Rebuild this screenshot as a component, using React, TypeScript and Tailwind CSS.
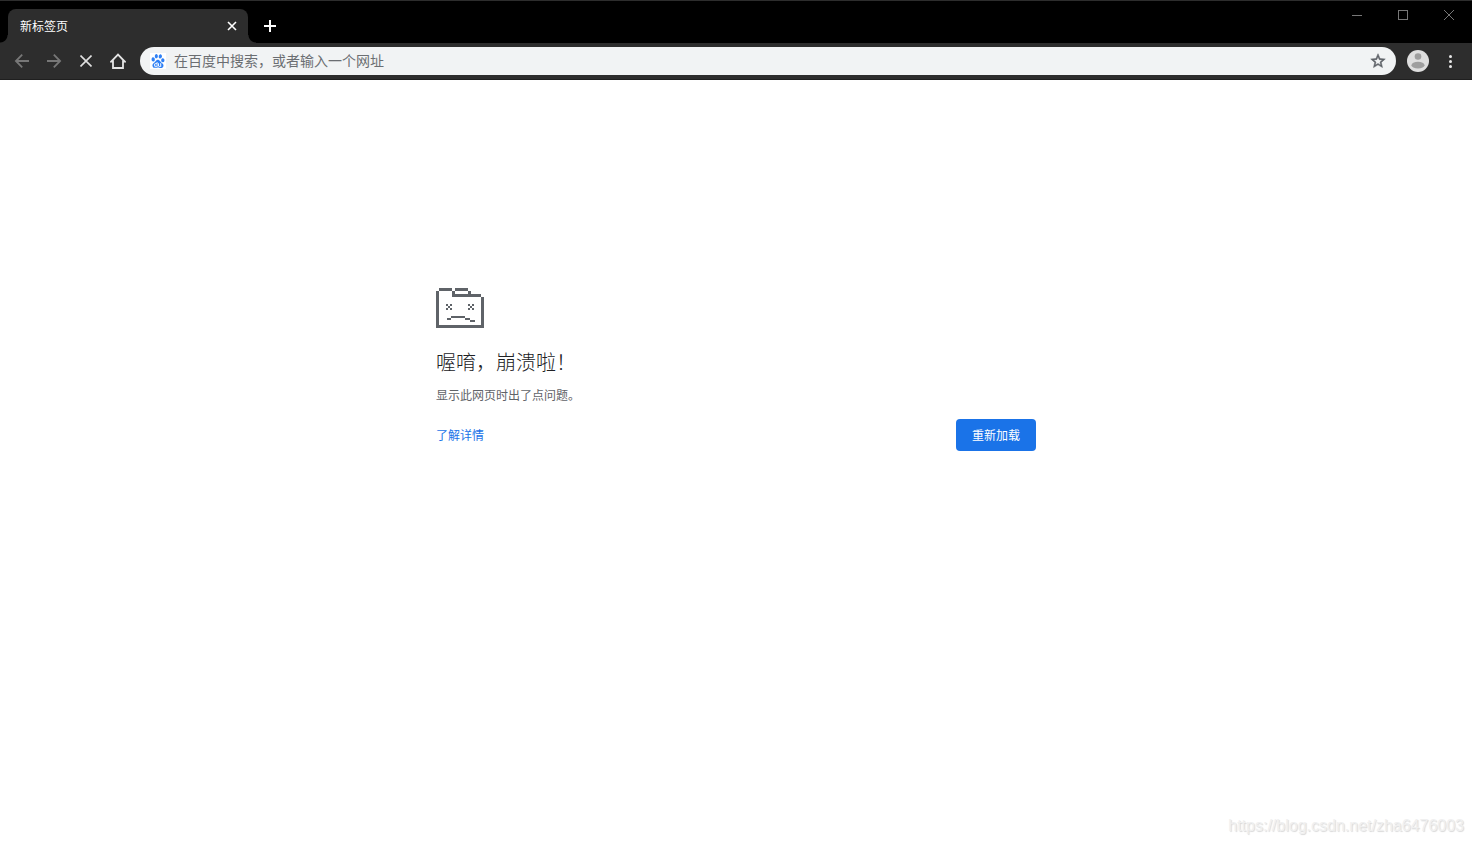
import React from "react";
import { SiBaidu } from "react-icons/si";

const iconButton = "flex h-7 w-7 items-center justify-center rounded-full";

function ArrowIcon({ forward = false }: { forward?: boolean }) {
  return (
    <svg viewBox="0 0 16 16" className="h-4 w-4" fill="none" stroke="#777777" strokeWidth="1.8">
      {forward ? <path d="M1 8H14M7.8 1.7L14.1 8L7.8 14.3" /> : <path d="M15 8H2M8.2 1.7L1.9 8L8.2 14.3" />}
    </svg>
  );
}

function TabStrip() {
  return (
    <div className="flex h-[43px] items-end justify-between border-t border-[#2d2d2d] bg-black">
      <div className="flex h-[34px] items-end">
        <div className="h-2 w-2 bg-[radial-gradient(circle_at_0_0,#000_7px,#2d2d2d_8px)]" />
        <div className="flex h-[34px] w-60 items-center justify-between rounded-t-lg bg-[#2d2d2d] pr-2 pl-3">
          <span className="text-xs text-white">新标签页</span>
          <button type="button" aria-label="关闭标签页" className="flex h-4 w-4 items-center justify-center">
            <svg viewBox="0 0 10 10" className="h-[10px] w-[10px]" stroke="#ffffff" strokeWidth="1.6">
              <path d="M1 1L9 9M9 1L1 9" />
            </svg>
          </button>
        </div>
        <div className="h-2 w-2 bg-[radial-gradient(circle_at_100%_0,#000_7px,#2d2d2d_8px)]" />
        <button type="button" aria-label="新标签页" className="flex h-[34px] w-7 items-center justify-center">
          <svg viewBox="0 0 12 12" className="h-3 w-3" fill="#ffffff">
            <path d="M5 0H7V5H12V7H7V12H5V7H0V5H5Z" />
          </svg>
        </button>
      </div>
      <div className="flex self-start">
        <button type="button" aria-label="最小化" className="flex h-7 w-[46px] items-center justify-center">
          <svg viewBox="0 0 10 10" className="h-[10px] w-[10px]" fill="#777777">
            <path d="M0 5H10V6H0Z" />
          </svg>
        </button>
        <button type="button" aria-label="最大化" className="flex h-7 w-[46px] items-center justify-center">
          <svg viewBox="0 0 10 10" className="h-[10px] w-[10px]" fill="none" stroke="#777777">
            <rect x="0.5" y="0.5" width="9" height="9" />
          </svg>
        </button>
        <button type="button" aria-label="关闭" className="flex h-7 w-[46px] items-center justify-center">
          <svg viewBox="0 0 10 10" className="h-[10px] w-[10px]" stroke="#777777">
            <path d="M0 0L10 10M10 0L0 10" />
          </svg>
        </button>
      </div>
    </div>
  );
}

function Toolbar() {
  return (
    <div className="flex h-[37px] items-center border-b border-[#1f1f1f] bg-[#2d2d2d] pr-2 pl-2">
      <div className="flex gap-1">
        <button type="button" aria-label="后退" className={iconButton}>
          <ArrowIcon />
        </button>
        <button type="button" aria-label="前进" className={iconButton}>
          <ArrowIcon forward />
        </button>
        <button type="button" aria-label="停止" className={iconButton}>
          <svg viewBox="0 0 12 12" className="h-3 w-3" stroke="#e0e0e0" strokeWidth="1.6">
            <path d="M0.5 0.5L11.5 11.5M11.5 0.5L0.5 11.5" />
          </svg>
        </button>
        <button type="button" aria-label="主页" className={iconButton}>
          <svg viewBox="0 0 16 16" className="h-4 w-4" fill="none" stroke="#e4e4e4" strokeWidth="1.8">
            <path d="M1.5 8.5H3V15H13V8.5H14.8L8 1.6L1.2 8.5Z" strokeLinejoin="miter" />
          </svg>
        </button>
      </div>
      <div className="ml-2 flex h-7 flex-1 items-center rounded-full bg-[#f1f3f4] pr-2 pl-[10px]">
        <span className="flex h-4 w-4 items-center justify-center bg-white">
          <SiBaidu className="h-[14px] w-[14px] text-[#2f80f5]" />
        </span>
        <input
          type="text"
          aria-label="地址和搜索栏"
          placeholder="在百度中搜索，或者输入一个网址"
          className="ml-2 h-6 flex-1 bg-transparent pb-0.5 text-sm text-[#202124] outline-none placeholder:text-[#6b6e72]"
        />
        <button type="button" aria-label="为此网页添加书签" className="flex h-5 w-5 items-center justify-center">
          <svg viewBox="1 1 22 22" className="h-4 w-4" fill="#5f6368" stroke="#5f6368" strokeWidth="0.7">
            <path d="M22 9.24l-7.19-.62L12 2 9.19 8.63 2 9.24l5.46 4.73L5.82 21 12 17.27 18.18 21l-1.63-7.03L22 9.24zM12 15.4l-3.76 2.27 1-4.28-3.32-2.88 4.38-.38L12 6.1l1.71 4.04 4.38.38-3.32 2.88 1 4.28L12 15.4z" />
          </svg>
        </button>
      </div>
      <button type="button" aria-label="用户" className="ml-2 flex h-7 w-7 items-center justify-center">
        <svg viewBox="0 0 22 22" className="h-[22px] w-[22px]">
          <circle cx="11" cy="11" r="11" fill="#dedede" />
          <circle cx="11" cy="6.5" r="3.3" fill="#9e9e9e" />
          <ellipse cx="11" cy="15.2" rx="6.5" ry="3.4" fill="#9e9e9e" />
        </svg>
      </button>
      <button type="button" aria-label="自定义及控制" className="ml-1 flex h-7 w-7 items-center justify-center">
        <svg viewBox="0 0 4 14" className="h-[14px] w-1" fill="#e8e8e8">
          <circle cx="2.5" cy="2.5" r="1.5" />
          <circle cx="2.5" cy="7.5" r="1.5" />
          <circle cx="2.5" cy="12.5" r="1.5" />
        </svg>
      </button>
    </div>
  );
}

function SadFolder() {
  return (
    <svg viewBox="0 0 48 40" className="h-10 w-12" fill="#5f6368" shapeRendering="crispEdges" aria-hidden="true">
      <path d="M3 0H16V3H3ZM19 0H32V3H19ZM0 3H3V37H45V9H48V40H0ZM16 3H19V6H45V9H16ZM32 3H35V6H32Z" />
      <path d="M10 16h2v2h-2zM14 16h2v2h-2zM12 18h2v2h-2zM10 20h2v2h-2zM14 20h2v2h-2z" />
      <path d="M32 16h2v2h-2zM36 16h2v2h-2zM34 18h2v2h-2zM32 20h2v2h-2zM36 20h2v2h-2z" />
      <path d="M11 30h4v2h-4zM15 28h14v2h-14zM29 30h5v2h-5zM34 32h5v2h-5z" />
    </svg>
  );
}

export default function App() {
  return (
    <div className="flex min-h-screen flex-col bg-white font-['Noto_Sans_CJK_SC',sans-serif]">
      <header>
        <TabStrip />
        <Toolbar />
      </header>
      <main className="mx-auto w-full max-w-[600px] flex-1 pt-52">
        <SadFolder />
        <h1 className="mt-5 text-xl leading-7 font-light text-[#202124]">喔唷，崩溃啦！</h1>
        <p className="mt-[7px] text-xs leading-6 text-[#5f6368]">显示此网页时出了点问题。</p>
        <div className="mt-3 flex items-center justify-between text-xs">
          <a href="#details" className="text-[#1a73e8]">
            了解详情
          </a>
          <button type="button" className="h-8 w-20 rounded bg-[#1a73e8] text-white">
            重新加载
          </button>
        </div>
      </main>
      <footer className="flex justify-end pr-2 pb-1.5 font-['Liberation_Sans',sans-serif] text-base text-[#f0f0f0] [text-shadow:1px_1px_1px_#d8d8d8]">
        https://blog.csdn.net/zha6476003
      </footer>
    </div>
  );
}
